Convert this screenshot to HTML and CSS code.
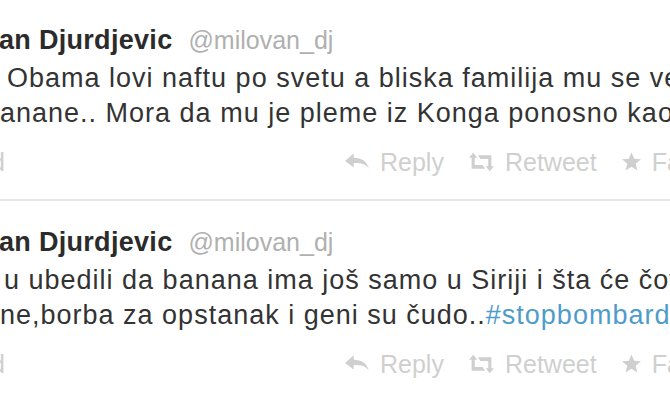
FILE: index.html
```html
<!DOCTYPE html>
<html lang="sr">
<head>
<meta charset="utf-8">
<link rel="stylesheet" href="styles.css">
</head>
<body>
<div class="stream">
  <div class="tweet">
    <div class="header"><span class="fullname">an Djurdjevic</span><span class="username">@milovan_dj</span></div>
    <div class="text">
      <div class="line indent">Obama lovi naftu po svetu a bliska familija mu se veseli</div>
      <div class="line">anane.. Mora da mu je pleme iz Konga ponosno kao nikad</div>
    </div>
    <div class="actions">
      <span class="stub">d</span>
      <span class="action reply"><svg class="ico" viewBox="0 0 24 20"><path d="M1 9 L9 2 L9 6 C16 6 21 9 23 16 C20 12 16 11 9 11 L9 15 Z"/></svg>Reply</span>
      <span class="action retweet"><svg class="ico rt" viewBox="0 0 26 20"><path d="M1 6 L5 1 L9 6 L6.5 6 L6.5 13 L14 13 L16.5 16.5 L3.5 16.5 L3.5 6 Z M25 14 L21 19 L17 14 L19.5 14 L19.5 7 L12 7 L9.5 3.5 L22.5 3.5 L22.5 14 Z"/></svg>Retweet</span>
      <span class="action fav"><svg class="ico star" viewBox="0 0 20 20"><path d="M10 1 L12.6 7 L19 7.4 L14 11.6 L15.6 18 L10 14.5 L4.4 18 L6 11.6 L1 7.4 L7.4 7 Z"/></svg>Favorite</span>
    </div>
  </div>
  <div class="tweet">
    <div class="header"><span class="fullname">an Djurdjevic</span><span class="username">@milovan_dj</span></div>
    <div class="text">
      <div class="line indent-s">u ubedili da banana ima još samo u Siriji i šta će čovek</div>
      <div class="line">ne,borba za opstanak i geni su čudo..<a class="hashtag">#stopbombardovanju</a></div>
    </div>
    <div class="actions">
      <span class="stub">d</span>
      <span class="action reply"><svg class="ico" viewBox="0 0 24 20"><path d="M1 9 L9 2 L9 6 C16 6 21 9 23 16 C20 12 16 11 9 11 L9 15 Z"/></svg>Reply</span>
      <span class="action retweet"><svg class="ico rt" viewBox="0 0 26 20"><path d="M1 6 L5 1 L9 6 L6.5 6 L6.5 13 L14 13 L16.5 16.5 L3.5 16.5 L3.5 6 Z M25 14 L21 19 L17 14 L19.5 14 L19.5 7 L12 7 L9.5 3.5 L22.5 3.5 L22.5 14 Z"/></svg>Retweet</span>
      <span class="action fav"><svg class="ico star" viewBox="0 0 20 20"><path d="M10 1 L12.6 7 L19 7.4 L14 11.6 L15.6 18 L10 14.5 L4.4 18 L6 11.6 L1 7.4 L7.4 7 Z"/></svg>Favorite</span>
    </div>
  </div>
</div>
</body>
</html>
```
FILE: styles.css
```css
html, body {
  margin: 0;
  padding: 0;
  background: #ffffff;
}
body {
  width: 670px;
  height: 400px;
  overflow: hidden;
  font-family: "Liberation Sans", Arial, sans-serif;
  color: #333333;
}
.stream {
  display: flex;
  flex-direction: column;
}
.tweet {
  height: 201px;
  box-sizing: border-box;
  padding-top: 22px;
  border-bottom: 2px solid #e8e8e8;
  overflow: hidden;
}
.tweet:last-child {
  border-bottom: none;
  padding-top: 23px;
}
.header {
  display: flex;
  align-items: baseline;
  white-space: nowrap;
  height: 36px;
  line-height: 36px;
}
.fullname {
  font-weight: bold;
  font-size: 27px;
  letter-spacing: 0.3px;
  color: #2b2b2b;
  margin-left: -1px;
}
.username {
  font-size: 25px;
  color: #b0b0b0;
  margin-left: 16px;
}
.text {
  font-size: 27px;
  line-height: 35px;
  letter-spacing: 1px;
  white-space: nowrap;
  margin-top: 3px;
}
.line.indent {
  padding-left: 7px;
}
.line.indent-s {
  padding-left: 4px;
}
.hashtag {
  color: #4f9ccb;
  text-decoration: none;
}
.actions {
  display: flex;
  align-items: center;
  margin-top: 13px;
  height: 36px;
  font-size: 25px;
  color: #cfcfcf;
  white-space: nowrap;
}
.stub {
  margin-left: -9px;
  width: 337px;
  flex: none;
}
.action {
  display: flex;
  align-items: center;
  flex: none;
  margin-left: 16px;
}
.ico {
  width: 26px;
  height: 22px;
  fill: #cfcfcf;
  margin-right: 10px;
}
.ico.rt {
  width: 27px;
}
.ico.star {
  width: 21px;
}
.retweet {
  margin-left: 24px;
}
.fav {
  margin-left: 24px;
}
```
